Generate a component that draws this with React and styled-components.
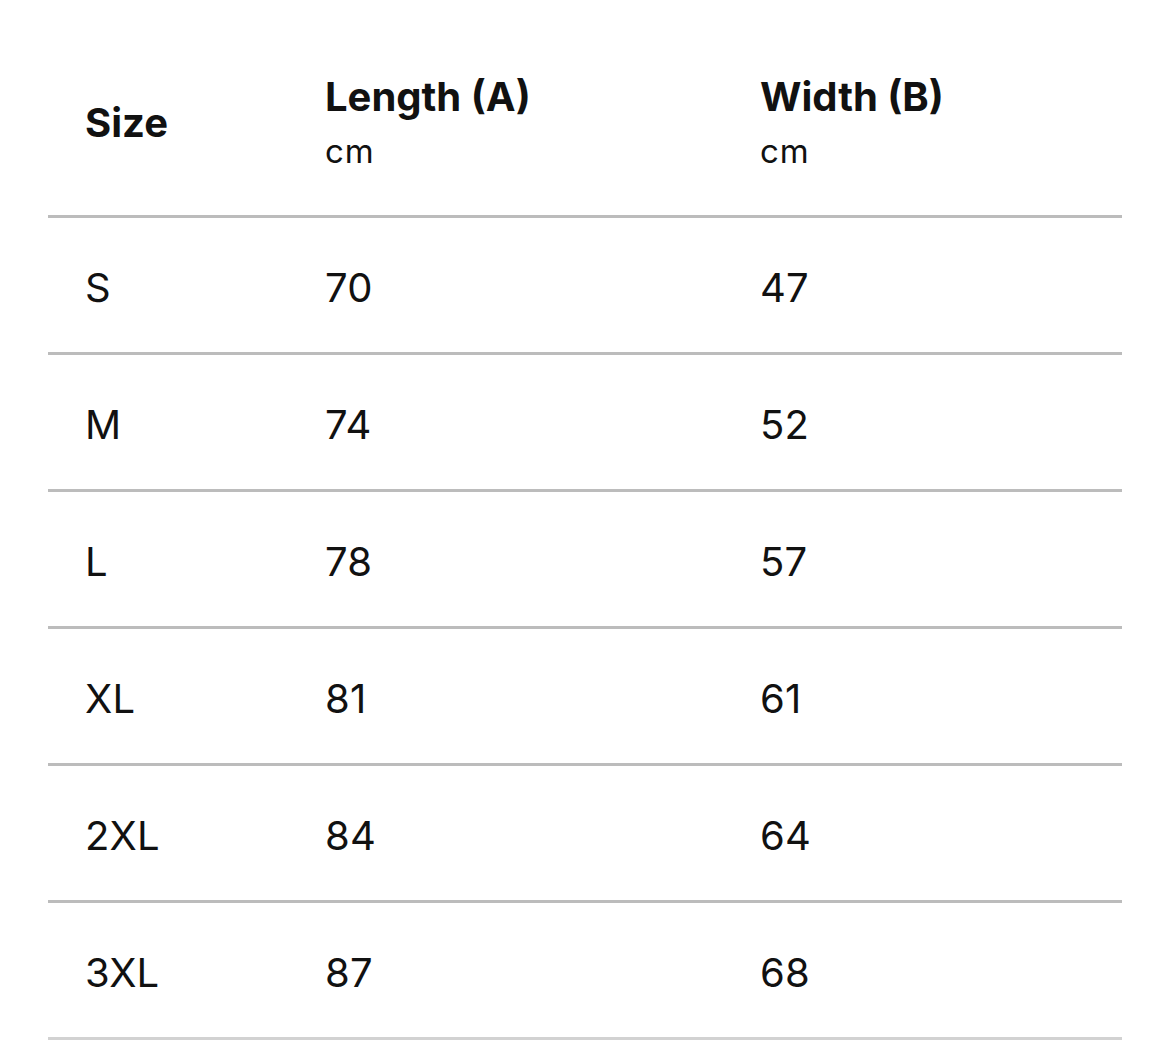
import React from 'react';
import styled, { createGlobalStyle } from 'styled-components';

const GlobalStyle = createGlobalStyle`
  html, body {
    margin: 0;
    padding: 0;
    background: #ffffff;
  }
  body {
    font-family: Inter, "Liberation Sans", Arial, sans-serif;
    color: #111111;
  }
`;

const Page = styled.div`
  padding: 0 48px;
`;

const Table = styled.div`
  display: flex;
  flex-direction: column;
`;

const Row = styled.div`
  display: grid;
  grid-template-columns: 240px 435px 1fr;
  align-items: center;
  border-bottom: 3px solid ${p => (p.$last ? '#d2d2d2' : '#bcbcbc')};
  height: 134px;
`;

const HeadRow = styled(Row)`
  height: 215px;
`;

const Cell = styled.div`
  padding-left: 37px;
  padding-top: 5px;
  font-size: 40px;
  line-height: 48px;
  font-weight: 400;
  letter-spacing: 0.2px;
`;

const HeadCell = styled.div`
  padding-left: 37px;
  padding-top: 30px;
  display: flex;
  flex-direction: column;
`;

const Title = styled.span`
  font-size: 40px;
  line-height: 56px;
  font-weight: 700;
`;

const Unit = styled.span`
  font-size: 33px;
  line-height: 52px;
  font-weight: 400;
  letter-spacing: 1px;
`;

const sizes = [
  { size: 'S', length: '70', width: '47' },
  { size: 'M', length: '74', width: '52' },
  { size: 'L', length: '78', width: '57' },
  { size: 'XL', length: '81', width: '61' },
  { size: '2XL', length: '84', width: '64' },
  { size: '3XL', length: '87', width: '68' },
];

const App = () => {
  return (
    <Page>
      <GlobalStyle />
      <Table>
        <HeadRow>
          <HeadCell>
            <Title>Size</Title>
          </HeadCell>
          <HeadCell>
            <Title>Length (A)</Title>
            <Unit>cm</Unit>
          </HeadCell>
          <HeadCell>
            <Title>Width (B)</Title>
            <Unit>cm</Unit>
          </HeadCell>
        </HeadRow>
        {sizes.map((row, index) => (
          <Row key={row.size} $last={index === sizes.length - 1}>
            <Cell>{row.size}</Cell>
            <Cell>{row.length}</Cell>
            <Cell>{row.width}</Cell>
          </Row>
        ))}
      </Table>
    </Page>
  );
};

export default App;
